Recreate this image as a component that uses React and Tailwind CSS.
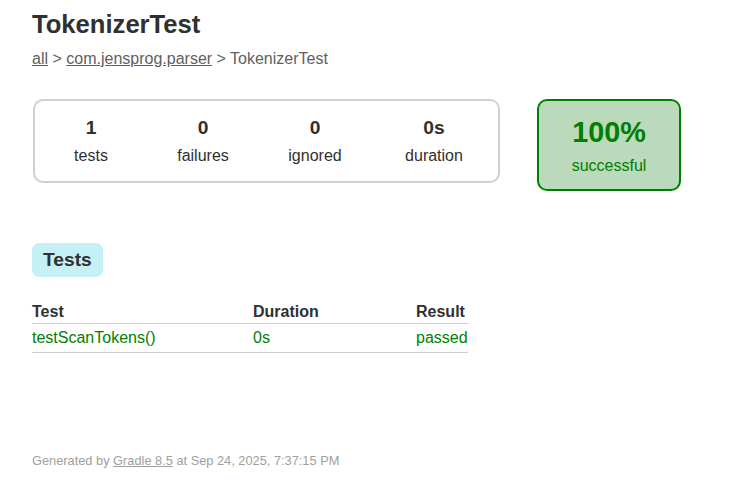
export default function App() {
  const cells = [
    { v: "1", l: "tests", w: "w-[112px]" },
    { v: "0", l: "failures", w: "w-[112px]" },
    { v: "0", l: "ignored", w: "w-[112px]" },
    { v: "0s", l: "duration", w: "w-[126px]" },
  ];
  return (
    <div className="min-h-screen bg-white text-[#303030] text-[16px] pl-[32px] pt-[10px] font-['Liberation_Sans',Arial,sans-serif]">
      <h1 className="text-[25.6px] leading-[29px] font-bold m-0">TokenizerTest</h1>
      <div className="mt-[11px] text-[#606060] leading-[18px]">
        <a className="underline text-[#606060]" href="#">all</a> &gt;{" "}
        <a className="underline text-[#606060]" href="#">com.jensprog.parser</a> &gt; TokenizerTest
      </div>
      <div className="mt-[31px] flex items-start">
        <div className="w-[467px] h-[84px] border-2 border-[#d0d0d0] rounded-[10px] flex ml-[1px]">
          {cells.map((c, i) => (
            <div key={i} className={`${c.w} pt-[16px] text-center`}>
              <div className="text-[19.2px] leading-[22px] font-bold mb-2">{c.v}</div>
              <div className="leading-[18px]">{c.l}</div>
            </div>
          ))}
        </div>
        <div className="ml-[37px] w-[144px] h-[92px] border-2 border-[#008000] bg-[#bbd9bb] rounded-[10px] pt-[15px] text-center text-[#008000]">
          <div className="text-[28.8px] leading-[33px] font-bold mb-2">100%</div>
          <div className="leading-[18px]">successful</div>
        </div>
      </div>
      <div className="mt-[52px] flex">
        <div className="bg-[#c5f0f5] border border-[#c5f0f5] rounded-[7px] px-[10px] py-[5px]">
          <h2 className="text-[19.2px] leading-[22px] font-bold m-0">Tests</h2>
        </div>
      </div>
      <div className="mt-[22px] w-[435px] grid grid-cols-[221px_163px_1fr] leading-[18px]">
        <div className="font-bold pt-[4px] pb-[2px] border-b border-[#d0d0d0]">Test</div>
        <div className="font-bold pt-[4px] pb-[2px] border-b border-[#d0d0d0]">Duration</div>
        <div className="font-bold pt-[4px] pb-[2px] border-b border-[#d0d0d0]">Result</div>
        <div className="py-[5px] border-b border-[#d0d0d0] text-[#008000]">testScanTokens()</div>
        <div className="py-[5px] border-b border-[#d0d0d0] text-[#008000]">0s</div>
        <div className="py-[5px] border-b border-[#d0d0d0] text-[#008000]">passed</div>
      </div>
      <div className="mt-[100px] text-[12.8px] leading-[15px] text-[#a0a0a0] whitespace-nowrap pb-[20px]">
        Generated by <a className="underline text-[#a0a0a0]" href="#">Gradle 8.5</a> at Sep 24, 2025, 7:37:15 PM
      </div>
    </div>
  );
}
